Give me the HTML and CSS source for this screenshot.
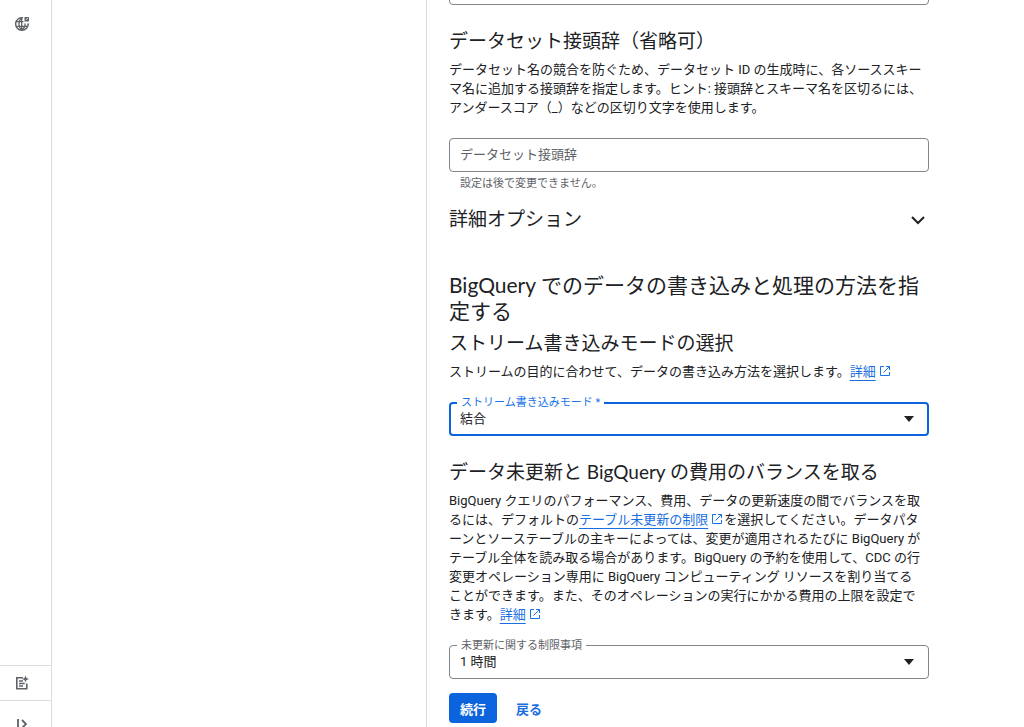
FILE: index.html
```html
<!DOCTYPE html>
<html lang="ja">
<head>
    <meta charset="UTF-8">
    <meta name="viewport" content="width=device-width, initial-scale=1.0">
    <title>ストリームの作成</title>
    <link rel="stylesheet" href="styles.css">
</head>
<body>
    <div class="page">
        <nav class="sidebar">
            <button class="nav-button nav-top" type="button" aria-label="プロファイル">
                <svg width="16" height="16" viewBox="0 0 16 16" fill="none" stroke="#5f6368">
                    <path d="M9 1.800A6.300 6.300 0 1 0 14.200 7.500" stroke-width="1.500"/>
                    <path d="M7.500 2C4 5.500 4 10.500 7.500 14.200C10.500 12 11.300 9.500 11 7.500M2 5.700H9.500M2 10.300H13.500M7.700 2V14" stroke-width="1.300"/>
                    <path d="M10.500 1H15V5.500H10.500Z" fill="#5f6368" stroke="none"/>
                    <path d="M12 3.800L14 1.800" stroke="#fff" stroke-width="1"/>
                </svg>
            </button>
            <div class="sidebar-bottom">
                <button class="nav-button" type="button" aria-label="リリースノート">
                    <svg width="16" height="16" viewBox="0 0 16 16" fill="none" stroke="#5f6368">
                        <path d="M9 2.800H2.800V13.800H12.800V8.500" stroke-width="1.600"/>
                        <path d="M5 6H9M5 8.500H10.800M5 11H9" stroke-width="1.500"/>
                        <path d="M11.500 .500L12.500 3L15 4L12.500 5L11.500 7.500L10.500 5L8 4L10.500 3Z" fill="#5f6368" stroke="none"/>
                    </svg>
                </button>
                <button class="nav-button nav-toggle" type="button" aria-label="メニューを開く">
                    <svg width="16" height="16" viewBox="0 0 16 16" fill="none" stroke="#5f6368" stroke-width="1.800">
                        <path d="M4 3V13M8 4L12 8L8 12"/>
                    </svg>
                </button>
            </div>
        </nav>
        <aside class="steps"></aside>
        <main class="content">
            <form class="form">
                <input class="text-input first-input" type="text" aria-label="ロケーション">

                <h3>データセット接頭辞（省略可）</h3>
                <p>データセット名の競合を防ぐため、データセット ID の生成時に、各ソーススキーマ名に追加する接頭辞を指定します。ヒント: 接頭辞とスキーマ名を区切るには、アンダースコア（_）などの区切り文字を使用します。</p>
                <input class="text-input" type="text" placeholder="データセット接頭辞" aria-label="データセット接頭辞" aria-describedby="prefixHint">
                <div class="hint" id="prefixHint">設定は後で変更できません。</div>

                <button class="expander" type="button">
                    詳細オプション
                    <svg width="14" height="10" viewBox="0 0 14 10" fill="none" stroke="#202124" stroke-width="2">
                        <path d="M1 2L7 8L13 2"/>
                    </svg>
                </button>

                <h2>BigQuery でのデータの書き込みと処理の方法を指定する</h2>
                <h3 class="sub-title">ストリーム書き込みモードの選択</h3>
                <p>ストリームの目的に合わせて、データの書き込み方法を選択します。<a href="#">詳細</a><svg class="external" width="12" height="12" viewBox="0 0 12 12"><path d="M5 1.500H1.500V10.500H10.500V7M7 1.500H10.500V5M10.500 1.500L4.500 7.500"/></svg></p>
                <div class="field focused">
                    <select id="writeMode">
                        <option>結合</option>
                    </select>
                    <label for="writeMode">ストリーム書き込みモード *</label>
                    <svg class="caret" width="10" height="6" viewBox="0 0 10 6"><path d="M0 0H10L5 6Z"/></svg>
                </div>

                <h3>データ未更新と BigQuery の費用のバランスを取る</h3>
                <p>BigQuery クエリのパフォーマンス、費用、データの更新速度の間でバランスを取るには、デフォルトの<a href="#">テーブル未更新の制限</a><svg class="external" width="12" height="12" viewBox="0 0 12 12"><path d="M5 1.500H1.500V10.500H10.500V7M7 1.500H10.500V5M10.500 1.500L4.500 7.500"/></svg>を選択してください。データパターンとソーステーブルの主キーによっては、変更が適用されるたびに BigQuery がテーブル全体を読み取る場合があります。BigQuery の予約を使用して、CDC の行変更オペレーション専用に BigQuery コンピューティング リソースを割り当てることができます。また、そのオペレーションの実行にかかる費用の上限を設定できます。<a href="#">詳細</a><svg class="external" width="12" height="12" viewBox="0 0 12 12"><path d="M5 1.500H1.500V10.500H10.500V7M7 1.500H10.500V5M10.500 1.500L4.500 7.500"/></svg></p>
                <div class="field">
                    <select id="staleness">
                        <option>1 時間</option>
                    </select>
                    <label for="staleness">未更新に関する制限事項</label>
                    <svg class="caret" width="10" height="6" viewBox="0 0 10 6"><path d="M0 0H10L5 6Z"/></svg>
                </div>

                <div class="actions">
                    <button class="primary" type="button">続行</button>
                    <button class="link-button" type="button">戻る</button>
                </div>
            </form>
        </main>
    </div>
</body>
</html>
```
FILE: styles.css
```css
* {
    box-sizing: border-box;
}

body {
    margin: 0;
    font-family: Roboto, "Noto Sans CJK JP", sans-serif;
    font-size: 13px;
    line-height: 19px;
    color: #202124;
    background-color: #fff;
}

.page {
    display: flex;
    height: 100vh;
    overflow: hidden;
}

.sidebar {
    display: flex;
    flex-direction: column;
    justify-content: space-between;
    flex: 0 0 52px;
    border-right: 1px solid #dadce0;
}

.nav-button {
    display: flex;
    align-items: center;
    width: 100%;
    height: 35px;
    padding: 0 14px;
    border: none;
    border-top: 1px solid #dadce0;
    background: none;
}

.nav-top {
    height: 48px;
    border-top: none;
}

.nav-toggle {
    align-items: flex-start;
    height: 27px;
    padding-top: 15px;
    overflow: hidden;
}

.steps {
    flex: 0 0 375px;
    border-right: 1px solid #dadce0;
}

.content {
    flex: 1;
    padding: 0 22px;
}

.form {
    max-width: 480px;
}

h2, h3 {
    margin: 0;
    font-family: Lato, "Noto Sans CJK JP", sans-serif;
    font-weight: 400;
    line-height: 26px;
}

h2 {
    margin-top: 39px;
    font-size: 21px;
}

h3 {
    margin-top: 23px;
    font-size: 19px;
}

.sub-title {
    margin-top: 6px;
}

p {
    margin: 6px 0 21px;
    padding-right: 4px;
}

a {
    color: #1a6fe0;
    text-decoration: underline;
    text-underline-offset: 4px;
}

.external {
    margin: 0 1px 0 3px;
    vertical-align: -1px;
    fill: none;
    stroke: #1a73e8;
}

.text-input, select {
    display: block;
    width: 100%;
    height: 34px;
    padding: 0 10px 2px;
    border: 1px solid #80868b;
    border-radius: 4px;
    background-color: #fff;
    color: #202124;
    font-family: inherit;
    font-size: 13px;
}

.text-input::placeholder {
    color: #5f6368;
    opacity: 1;
}

.first-input {
    margin-top: -29px;
}

.hint {
    margin: 4px 11px 0;
    color: #5f6368;
    font-size: 11px;
    line-height: 16px;
}

.expander {
    display: flex;
    align-items: center;
    justify-content: space-between;
    width: 100%;
    margin-top: 15px;
    padding: 0 4px 0 0;
    border: none;
    background: none;
    color: #202124;
    font-family: inherit;
    font-size: 19px;
    line-height: 26px;
}

.field {
    position: relative;
}

select {
    appearance: none;
}

.field label {
    position: absolute;
    top: -5px;
    left: 8px;
    padding: 0 4px;
    background-color: #fff;
    color: #5f6368;
    font-size: 11px;
    line-height: 12px;
}

.focused select {
    padding: 0 9px 2px;
    border: 2px solid #0b63dd;
}

.focused label {
    color: #1a73e8;
}

.caret {
    position: absolute;
    top: 14px;
    right: 15px;
    fill: #202124;
    pointer-events: none;
}

.actions {
    display: flex;
    gap: 8px;
    margin-top: 14px;
}

.actions button {
    height: 30px;
    padding: 0 11px;
    border: none;
    border-radius: 4px;
    font-family: inherit;
    font-size: 13px;
    font-weight: 700;
}

.primary {
    background-color: #0b63dd;
    color: #fff;
}

.link-button {
    background: none;
    color: #1a6fe0;
}
```
